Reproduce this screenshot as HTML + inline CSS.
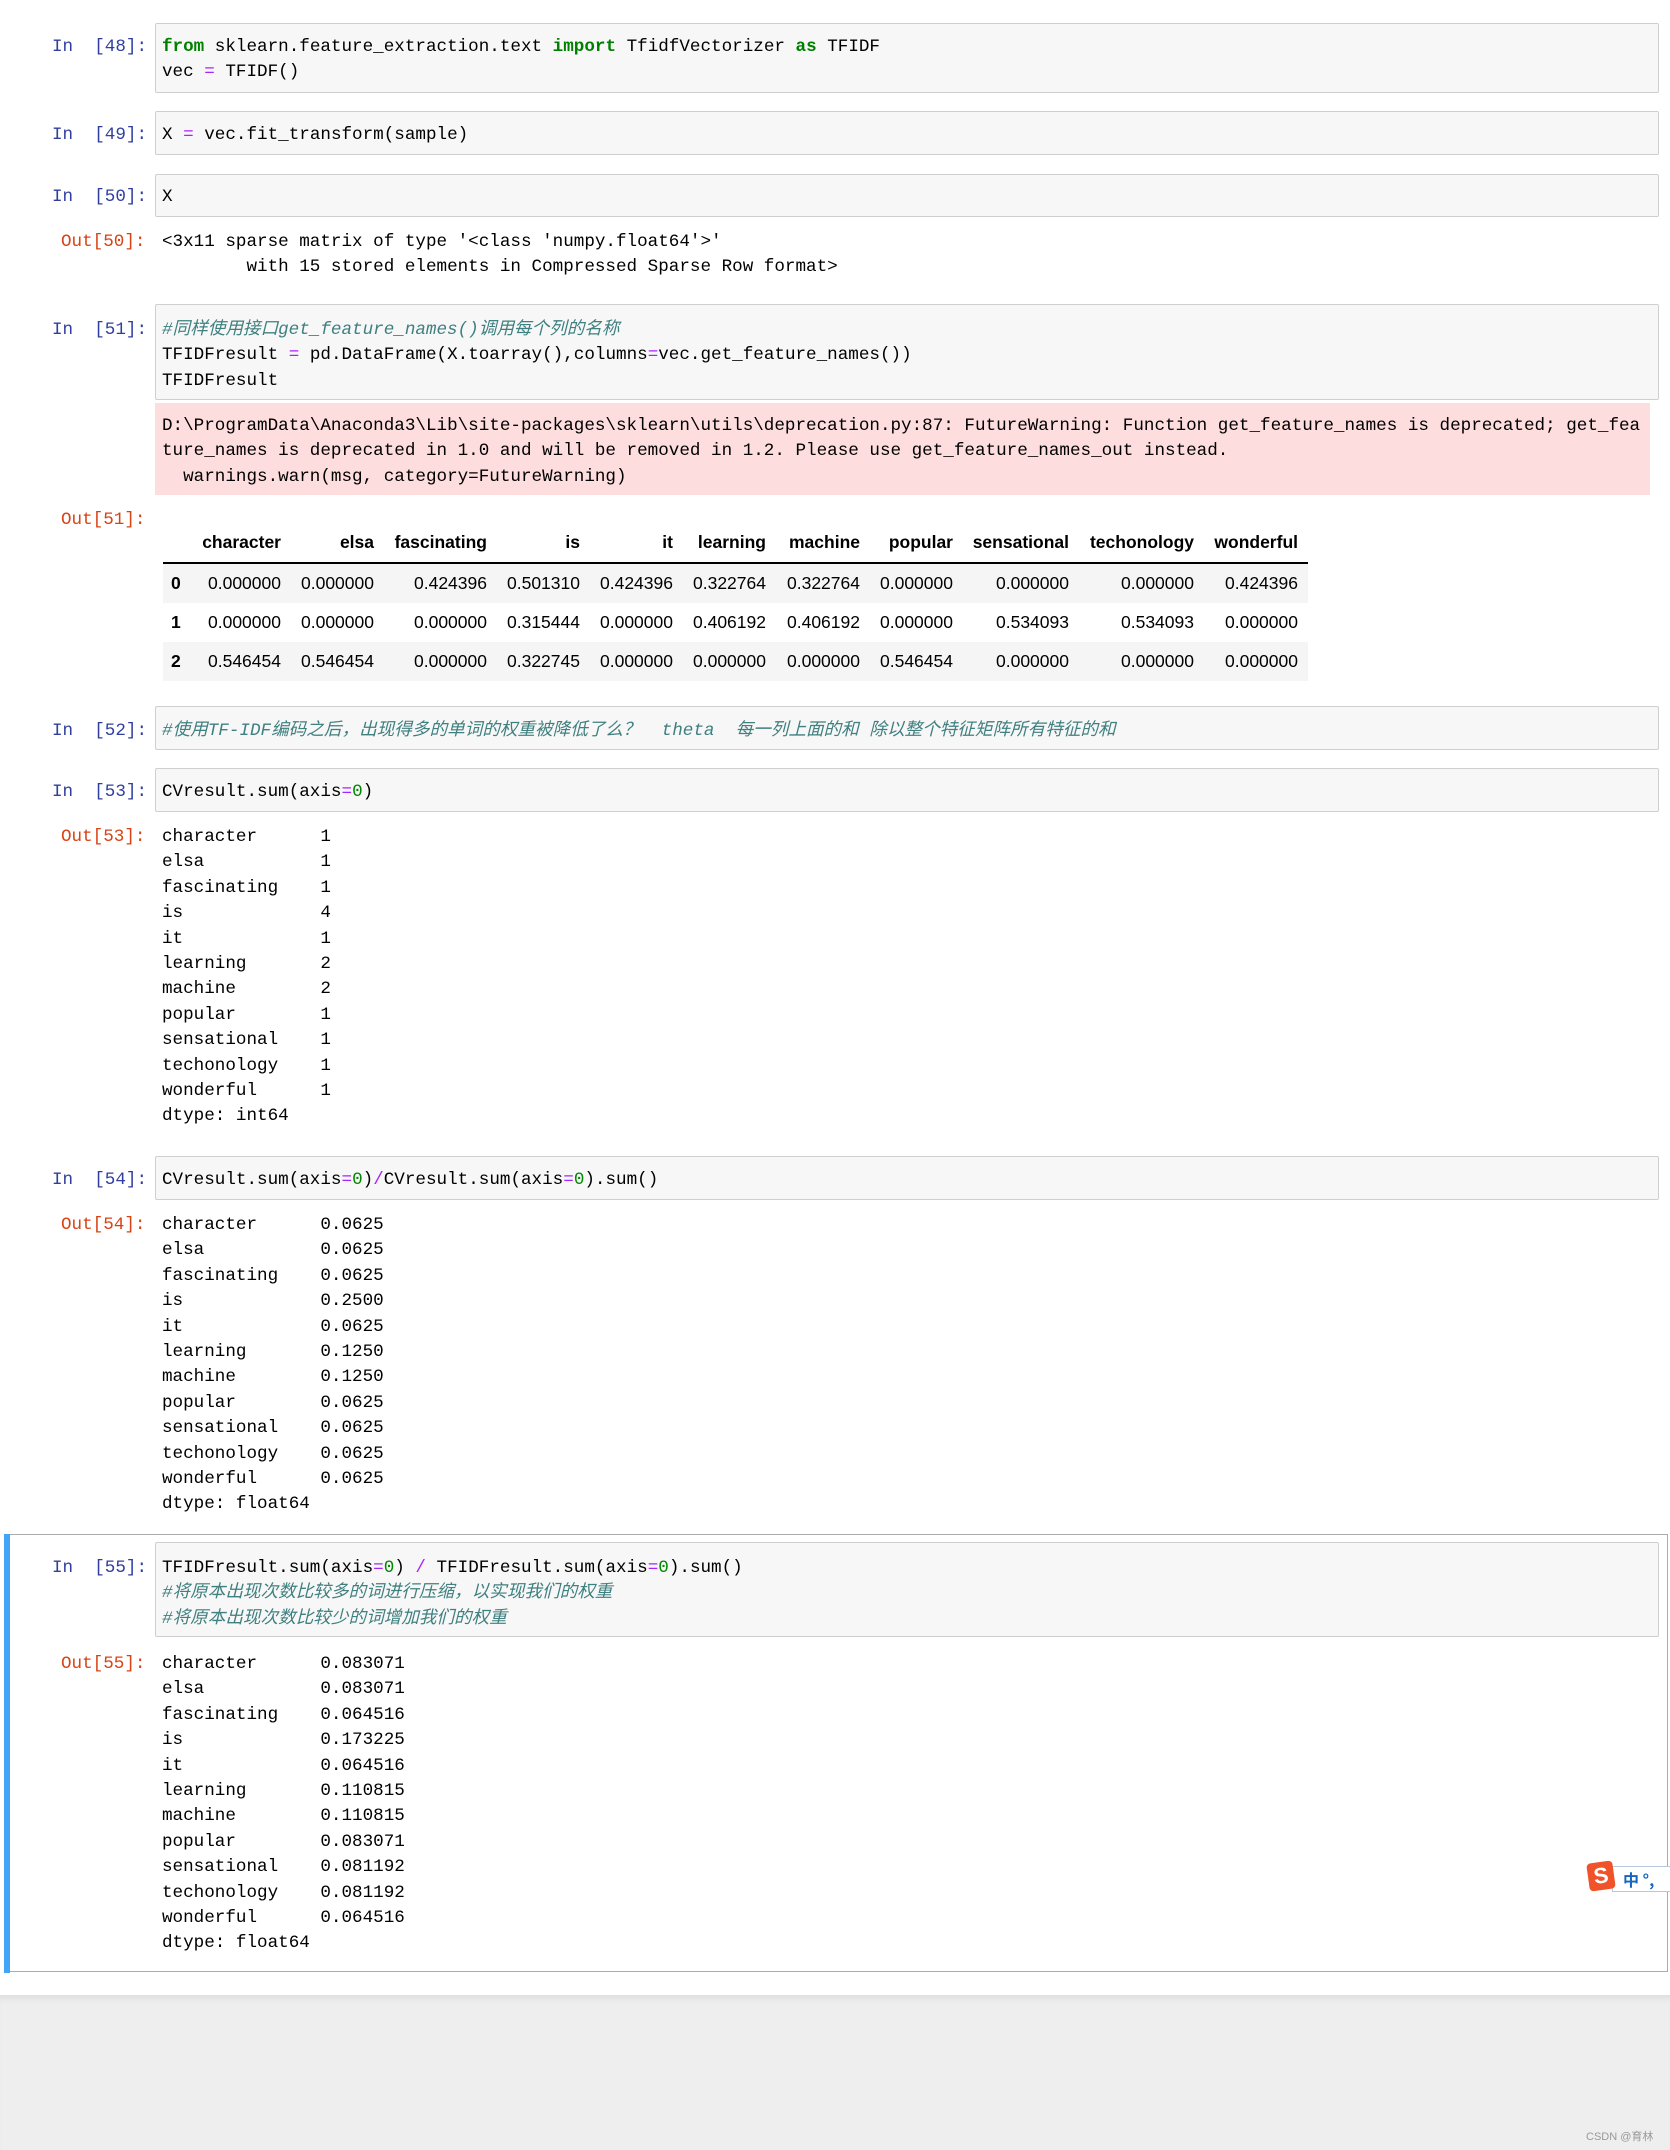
<!DOCTYPE html>
<html><head><meta charset="utf-8">
<style>
*{margin:0;padding:0;box-sizing:border-box}
body{width:1670px;height:2150px;background:#fff;position:relative;overflow:hidden;font-family:"Liberation Mono","Noto Sans CJK SC",monospace;font-size:17.6px;color:#000}
.a{position:absolute;white-space:pre;line-height:25.4px;margin-top:3px}
.box{position:absolute;left:155px;width:1504px;background:#f7f7f7;border:1px solid #cfcfcf;border-radius:2px}
.pin{position:absolute;color:#303f9f;white-space:pre;line-height:25px;margin-top:3px}
.pout{position:absolute;color:#d84315;white-space:pre;line-height:25px;margin-top:3px}
.k{color:#008000;font-weight:bold}
.o{color:#aa22ff}
.n{color:#008800}
.c{color:#408080;font-style:italic}
.tb{position:absolute;font-family:"Liberation Sans",Arial,sans-serif;font-size:17.5px;white-space:nowrap}
.r{position:absolute;left:163px;width:1145px;height:39px}
.cell{position:absolute;text-align:right;width:120px;line-height:39px}
</style></head><body>

<div class="pin" style="left:52px;top:32px">In  [48]:</div>
<div class="box" style="top:23px;height:70px"></div>
<div class="a" style="left:162px;top:32px"><span class="k">from</span> sklearn.feature_extraction.text <span class="k">import</span> TfidfVectorizer <span class="k">as</span> TFIDF
vec <span class="o">=</span> TFIDF()</div>

<div class="pin" style="left:52px;top:120px">In  [49]:</div>
<div class="box" style="top:111px;height:44px"></div>
<div class="a" style="left:162px;top:120px">X <span class="o">=</span> vec.fit_transform(sample)</div>

<div class="pin" style="left:52px;top:182px">In  [50]:</div>
<div class="box" style="top:174px;height:43px"></div>
<div class="a" style="left:162px;top:182px">X</div>
<div class="pout" style="left:61px;top:227px">Out[50]:</div>
<div class="a" style="left:162px;top:227px">&lt;3x11 sparse matrix of type '&lt;class 'numpy.float64'&gt;'
        with 15 stored elements in Compressed Sparse Row format&gt;</div>

<div class="pin" style="left:52px;top:315px">In  [51]:</div>
<div class="box" style="top:304px;height:96px"></div>
<div class="a" style="left:162px;top:315px"><span class="c">#同样使用接口get_feature_names()调用每个列的名称</span>
TFIDFresult <span class="o">=</span> pd.DataFrame(X.toarray(),columns<span class="o">=</span>vec.get_feature_names())
TFIDFresult</div>
<div style="position:absolute;left:155px;top:403px;width:1495px;height:92px;background:#fddddd"></div>
<div class="a" style="left:162px;top:411px">D:\ProgramData\Anaconda3\Lib\site-packages\sklearn\utils\deprecation.py:87: FutureWarning: Function get_feature_names is deprecated; get_fea
ture_names is deprecated in 1.0 and will be removed in 1.2. Please use get_feature_names_out instead.
  warnings.warn(msg, category=FutureWarning)</div>
<div class="pout" style="left:61px;top:505px">Out[51]:</div>

<div class="tb" style="left:0;top:0;width:1670px;height:700px">
<div class="r" style="top:523px;font-weight:bold">
<div class="cell" style="left:0;width:118px">character</div>
<div class="cell" style="left:91px">elsa</div>
<div class="cell" style="left:204px">fascinating</div>
<div class="cell" style="left:297px">is</div>
<div class="cell" style="left:390px">it</div>
<div class="cell" style="left:483px">learning</div>
<div class="cell" style="left:577px">machine</div>
<div class="cell" style="left:670px">popular</div>
<div class="cell" style="left:786px;width:120px">sensational</div>
<div class="cell" style="left:911px">techonology</div>
<div class="cell" style="left:1015px">wonderful</div>
</div>
<div style="position:absolute;left:163px;top:562px;width:1145px;height:2px;background:#000"></div>
<div class="r" style="top:564px;background:#f5f5f5"></div>
<div class="r" style="top:642px;background:#f5f5f5"></div>
</div>

<div id="rows"></div>

<div class="pin" style="left:52px;top:716px">In  [52]:</div>
<div class="box" style="top:706px;height:44px"></div>
<div class="a c" style="left:162px;top:716px">#使用TF-IDF编码之后，出现得多的单词的权重被降低了么？  theta  每一列上面的和 除以整个特征矩阵所有特征的和</div>

<div class="pin" style="left:52px;top:777px">In  [53]:</div>
<div class="box" style="top:768px;height:44px"></div>
<div class="a" style="left:162px;top:777px">CVresult.sum(axis<span class="o">=</span><span class="n">0</span>)</div>
<div class="pout" style="left:61px;top:822px">Out[53]:</div>
<div class="a" style="left:162px;top:822px">character      1
elsa           1
fascinating    1
is             4
it             1
learning       2
machine        2
popular        1
sensational    1
techonology    1
wonderful      1
dtype: int64</div>

<div class="pin" style="left:52px;top:1165px">In  [54]:</div>
<div class="box" style="top:1156px;height:44px"></div>
<div class="a" style="left:162px;top:1165px">CVresult.sum(axis<span class="o">=</span><span class="n">0</span>)<span class="o">/</span>CVresult.sum(axis<span class="o">=</span><span class="n">0</span>).sum()</div>
<div class="pout" style="left:61px;top:1210px">Out[54]:</div>
<div class="a" style="left:162px;top:1210px">character      0.0625
elsa           0.0625
fascinating    0.0625
is             0.2500
it             0.0625
learning       0.1250
machine        0.1250
popular        0.0625
sensational    0.0625
techonology    0.0625
wonderful      0.0625
dtype: float64</div>

<div style="position:absolute;left:4px;top:1534px;width:1664px;height:438px;border:1px solid #ababab;border-left:none"></div>
<div style="position:absolute;left:4px;top:1534px;width:6px;height:439px;background:#42a5f5"></div>
<div class="pin" style="left:52px;top:1553px">In  [55]:</div>
<div class="box" style="top:1542px;height:95px;width:1504px"></div>
<div class="a" style="left:162px;top:1553px">TFIDFresult.sum(axis<span class="o">=</span><span class="n">0</span>) <span class="o">/</span> TFIDFresult.sum(axis<span class="o">=</span><span class="n">0</span>).sum()
<span class="c">#将原本出现次数比较多的词进行压缩，以实现我们的权重</span>
<span class="c">#将原本出现次数比较少的词增加我们的权重</span></div>
<div class="pout" style="left:61px;top:1649px">Out[55]:</div>
<div class="a" style="left:162px;top:1649px">character      0.083071
elsa           0.083071
fascinating    0.064516
is             0.173225
it             0.064516
learning       0.110815
machine        0.110815
popular        0.083071
sensational    0.081192
techonology    0.081192
wonderful      0.064516
dtype: float64</div>

<div style="position:absolute;left:1612px;top:1866px;width:60px;height:26px;border:1px solid #b8c8dc;border-right:none;background:#fff"></div>
<div style="position:absolute;left:1588px;top:1862px;width:26px;height:28px;background:#f0522a;border-radius:4px;transform:rotate(-8deg);color:#fff;font:bold 22px 'Liberation Sans',sans-serif;text-align:center;line-height:28px">S</div>
<div style="position:absolute;left:1623px;top:1867px;color:#1565c0;font:bold 16px 'Noto Sans CJK SC',sans-serif;line-height:24px">中 °,</div>

<div style="position:absolute;left:0;top:1995px;width:1670px;height:155px;background:#eeeeee;box-shadow:inset 0 8px 8px -6px #d8d8d8"></div>
<div style="position:absolute;left:1586px;top:2128px;font:11px 'Liberation Sans','Noto Sans CJK SC',sans-serif;color:#999">CSDN @育林</div>

<script>
var R=[281,374,487,580,673,766,860,953,1069,1194,1298];
var d=[["0","0.000000","0.000000","0.424396","0.501310","0.424396","0.322764","0.322764","0.000000","0.000000","0.000000","0.424396"],
["1","0.000000","0.000000","0.000000","0.315444","0.000000","0.406192","0.406192","0.000000","0.534093","0.534093","0.000000"],
["2","0.546454","0.546454","0.000000","0.322745","0.000000","0.000000","0.000000","0.546454","0.000000","0.000000","0.000000"]];
var h="";var tops=[564,603,642];
for(var i=0;i<3;i++){
 h+='<div class="tb" style="left:171px;top:'+tops[i]+'px;line-height:39px;font-weight:bold">'+d[i][0]+'</div>';
 for(var j=0;j<11;j++){
  h+='<div class="tb" style="left:'+(R[j]-120)+'px;width:120px;text-align:right;top:'+tops[i]+'px;line-height:39px">'+d[i][j+1]+'</div>';
 }
}
document.getElementById("rows").innerHTML=h;
</script>
</body></html>
